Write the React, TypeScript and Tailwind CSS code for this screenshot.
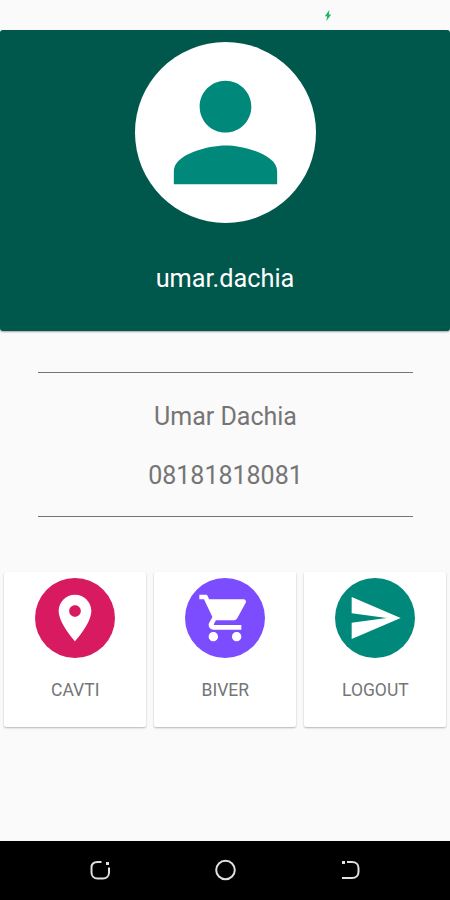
import type { ReactNode } from "react";

interface ActionCardProps {
  label: string;
  color: string;
  path: string;
}

const actions: ActionCardProps[] = [
  {
    label: "CAVTI",
    color: "bg-[#d81b60]",
    path: "M12 2C8.13 2 5 5.13 5 9c0 5.25 7 13 7 13s7-7.75 7-13c0-3.87-3.13-7-7-7zm0 9.5c-1.38 0-2.5-1.12-2.5-2.5s1.12-2.5 2.5-2.5 2.5 1.12 2.5 2.5-1.12 2.5-2.5 2.5z",
  },
  {
    label: "BIVER",
    color: "bg-[#7c4dff]",
    path: "M7 18c-1.1 0-1.99.9-1.99 2S5.9 22 7 22s2-.9 2-2-.9-2-2-2zM1 2v2h2l3.6 7.59-1.35 2.45c-.16.28-.25.61-.25.96 0 1.1.9 2 2 2h12v-2H7.42c-.14 0-.25-.11-.25-.25l.03-.12.9-1.63h7.45c.75 0 1.41-.41 1.75-1.03l3.58-6.49c.08-.14.12-.31.12-.48 0-.55-.45-1-1-1H5.21l-.94-2H1zm16 16c-1.1 0-1.99.9-1.99 2s.89 2 1.99 2 2-.9 2-2-.9-2-2-2z",
  },
  {
    label: "LOGOUT",
    color: "bg-[#00897b]",
    path: "M2.01 21L23 12 2.01 3 2 10l15 2-15 2z",
  },
];

function ActionCard({ label, color, path }: ActionCardProps) {
  return (
    <button className="flex h-[155px] flex-col items-center rounded-[2px] bg-white pt-[6px] shadow-[0_1px_2px_rgba(0,0,0,0.28)]">
      <span className={`flex size-[80px] items-center justify-center rounded-full ${color}`}>
        <svg viewBox="0 0 24 24" className="size-[56px] fill-white">
          <path d={path} />
        </svg>
      </span>
      <span className="mt-[20px] text-[17.5px] leading-[24px] text-[#757575]">{label}</span>
    </button>
  );
}

function NavButton({ children }: { children: ReactNode }) {
  return (
    <button className="flex w-[125px] justify-center">
      <svg viewBox="0 0 24 24" className="size-6 fill-none stroke-[#e0e0e0] stroke-2">
        {children}
      </svg>
    </button>
  );
}

export default function App() {
  return (
    <div className="flex h-[900px] w-[450px] flex-col overflow-hidden bg-[#fafafa] font-['Roboto',sans-serif]">
      <div className="h-[30.4px] shrink-0 pt-[10px] pl-[323.5px]">
        <svg viewBox="0 0 8 12" className="h-[11px] w-2 fill-[#20b95c]">
          <path d="M5.5 0L0.5 6.8h2.5L2.3 12 7.5 4.8H5z" />
        </svg>
      </div>

      <header className="flex h-[300.6px] shrink-0 flex-col items-center rounded-[3px] bg-[#00574b] pt-[12px] shadow-[0_1px_2px_rgba(0,0,0,0.35)]">
        <div className="flex size-[181px] items-center justify-center rounded-full bg-white">
          <svg viewBox="0 0 24 24" className="size-[155px] fill-[#00897b]">
            <path d="M12 12c2.21 0 4-1.79 4-4s-1.79-4-4-4-4 1.79-4 4 1.79 4 4 4zm0 2c-2.67 0-8 1.34-8 4v2h16v-2c0-2.66-5.33-4-8-4z" />
          </svg>
        </div>
        <h1 className="mt-[40px] text-[25.3px] leading-[32px] text-white">umar.dachia</h1>
      </header>

      <section className="mr-[37px] ml-[38px] mt-[41px] flex h-[145px] shrink-0 flex-col items-center border-y border-[#757575] text-[25px] leading-[32px] text-[#757575]">
        <p className="mt-[28px]">Umar Dachia</p>
        <p className="mt-[27px]">08181818081</p>
      </section>

      <main className="mt-[55px] grid grid-cols-3 gap-2 pr-[3.6px] pl-[4.2px]">
        {actions.map((action) => (
          <ActionCard key={action.label} {...action} />
        ))}
      </main>

      <nav className="mt-auto flex h-[59px] shrink-0 items-center justify-center bg-black pb-px">
        <NavButton>
          <path d="M13.5 4H9.5C6 4 3.5 6 3.5 9.5v5c0 3.5 2.5 6 6 6h5.5c3.5 0 6-2.5 6-6V9.5" />
          <path d="M18 5.5h3" className="stroke-[3]" />
        </NavButton>
        <NavButton>
          <circle cx="12.5" cy="12" r="9.3" />
        </NavButton>
        <NavButton>
          <path d="M9 4h5c4 0 6.5 2.5 6.5 6v4c0 3.5-2.5 6-6.5 6H4" />
          <path d="M4 4.5h3" className="stroke-[3]" />
        </NavButton>
      </nav>
    </div>
  );
}
